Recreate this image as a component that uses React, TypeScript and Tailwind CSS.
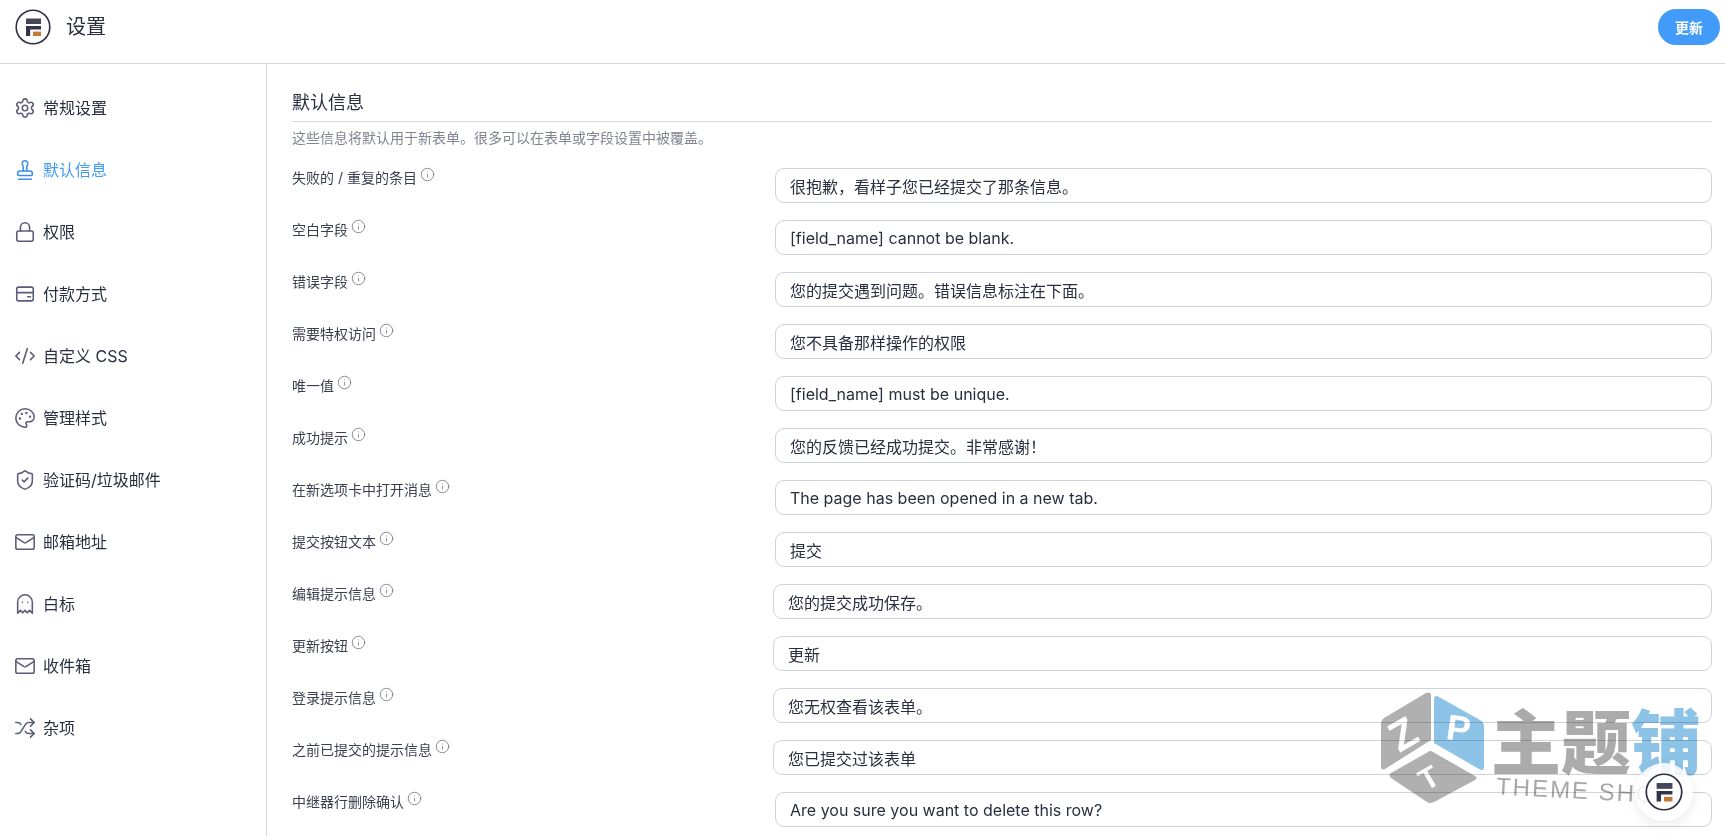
import React from "react";
import { Settings, Stamp, Lock, CodeXml, Palette, ShieldCheck, Mail, Ghost, Shuffle, Info } from "lucide-react";

function Logo({ size }: { size: number }) {
  return (
    <svg width={size} height={size} viewBox="0 0 36 36" fill="none">
      <circle cx="18" cy="18" r="16.8" stroke="#2f3044" strokeWidth="1.6" fill="#fff" />
      <rect x="11" y="9.5" width="15" height="5.5" fill="#45465a" />
      <path d="M11 17h15v3.4H15.2V27H11z" fill="#33344a" />
      <rect x="18" y="22.6" width="8" height="4.4" fill="#c47a35" />
    </svg>
  );
}

function Card({ size, strokeWidth, className }: { size: number; strokeWidth: number; className?: string }) {
  return (
    <svg width={size} height={size} viewBox="0 0 24 24" fill="none" stroke="currentColor" strokeWidth={strokeWidth} strokeLinecap="round" className={className}>
      <rect x="3" y="4.5" width="18" height="15" rx="2" />
      <path d="M3 10.5h18M15 15h3" />
    </svg>
  );
}

const nav = [
  { label: "常规设置", Icon: Settings },
  { label: "默认信息", Icon: Stamp, active: true },
  { label: "权限", Icon: Lock },
  { label: "付款方式", Icon: Card },
  { label: "自定义 CSS", Icon: CodeXml },
  { label: "管理样式", Icon: Palette },
  { label: "验证码/垃圾邮件", Icon: ShieldCheck },
  { label: "邮箱地址", Icon: Mail },
  { label: "白标", Icon: Ghost },
  { label: "收件箱", Icon: Mail },
  { label: "杂项", Icon: Shuffle },
];

const rows = [
  ["失败的 / 重复的条目", "很抱歉，看样子您已经提交了那条信息。", 0],
  ["空白字段", "[field_name] cannot be blank.", 0],
  ["错误字段", "您的提交遇到问题。错误信息标注在下面。", 0],
  ["需要特权访问", "您不具备那样操作的权限", 0],
  ["唯一值", "[field_name] must be unique.", 0],
  ["成功提示", "您的反馈已经成功提交。非常感谢！", 0],
  ["在新选项卡中打开消息", "The page has been opened in a new tab.", 0],
  ["提交按钮文本", "提交", 0],
  ["编辑提示信息", "您的提交成功保存。", 1],
  ["更新按钮", "更新", 1],
  ["登录提示信息", "您无权查看该表单。", 1],
  ["之前已提交的提示信息", "您已提交过该表单", 1],
  ["中继器行删除确认", "Are you sure you want to delete this row?", 0],
] as const;

function Watermark() {
  return (
    <div className="absolute left-[1381px] top-[692px] w-[290px] h-[120px] pointer-events-none mix-blend-multiply">
      <svg width="106" height="114" viewBox="0 0 106 114" className="absolute left-0 top-0">
        <path d="M0 31 Q0 28 3 26 L45 1 Q50 -1 50 4 L50 48 L4 77 Q0 79 0 74 Z" fill="#b0b0b0" />
        <path d="M53 8 Q53 2 58 5 L99 28 Q103 30 103 35 L103 75 Q103 80 98 77 L53 51 Z" fill="#8cc3e6" />
        <path d="M47 60 Q49 58 52 60 L94 84 Q97 86 94 88 L53 110 Q49 112 46 110 L10 86 Q7 83 10 81 Z" fill="#b0b0b0" />
        <text x="13" y="64" fill="#fff" fontSize="42" fontWeight="700" fontFamily="Liberation Sans" transform="rotate(-30 13 64)" dx="6">Z</text>
        <text x="64" y="47" fill="#fff" fontSize="36" fontWeight="700" fontFamily="Liberation Sans" transform="rotate(8 64 47)">P</text>
        <text x="38" y="95" fill="#fff" fontSize="30" fontWeight="700" fontFamily="Liberation Sans" transform="rotate(-30 50 84)">T</text>
      </svg>
      <div className="absolute left-[110px] top-[2px] flex text-[70px] leading-[90px] font-black font-['Noto_Sans_CJK_SC',sans-serif] whitespace-nowrap">
        <span className="text-[#ababab]">主题</span>
        <span className="text-[#8cc3e6]">铺</span>
      </div>
      <div className="absolute left-[115px] top-[86px] text-[24px] leading-[26px] tracking-[2px] text-[#a8a8a8] font-['Liberation_Sans',sans-serif] whitespace-nowrap rotate-[3deg]">THEME SHOP</div>
    </div>
  );
}

export default function App() {
  return (
    <div className="relative w-[1725px] h-[836px] overflow-hidden bg-white text-[#282f3f] font-['Inter','Noto_Sans_CJK_SC',sans-serif]">
      <header className="h-[64px] border-b border-[#d8d8d8] flex items-center justify-between pl-[15px] pr-[5px] pb-[9px]">
        <div className="flex items-center gap-[15px]">
          <Logo size={36} />
          <span className="text-[20px] leading-[28px] text-[#2b2f3d]">设置</span>
        </div>
        <button className="w-[62px] h-[36px] rounded-full bg-[#429bf8] text-white text-[14px] font-semibold">更新</button>
      </header>
      <div className="flex h-[772px]">
        <aside className="w-[267px] shrink-0 border-r border-[#d8d8d8] pl-[14px] pt-[26px] flex flex-col gap-[26px]">
          {nav.map(({ label, Icon, active }) => (
            <div key={label + (active ? "a" : "")} className={`h-[36px] flex items-center gap-[7px] text-[16px] ${active ? "text-[#429bf8]" : "text-[#282f3f]"}`}>
              <Icon size={22} strokeWidth={1.7} className={active ? "text-[#3b8fe8]" : "text-[#5b5b7a]"} />
              <span>{label}</span>
            </div>
          ))}
        </aside>
        <main className="flex-1 min-w-0 pl-[25px] pr-[13px] pt-[28px]">
          <h2 className="text-[18px] leading-[22px] pb-[7px] border-b border-[#d8d8d8] text-[#282f3f]">默认信息</h2>
          <p className="text-[14px] leading-[20px] mt-[6px] text-[#808590]">这些信息将默认用于新表单。很多可以在表单或字段设置中被覆盖。</p>
          <div className="flex flex-col gap-[17px] mt-[20px]">
            {rows.map(([label, value, shift]) => (
              <div key={label} className="flex h-[35px]">
                <div className="w-[483px] shrink-0 flex items-start text-[14px] leading-[20px] text-[#3a3f4e]">
                  <span>{label}</span>
                  <Info size={15} strokeWidth={1.3} className="ml-[3px] -mt-[1px] text-[#70747f]" />
                </div>
                <input
                  readOnly
                  value={value}
                  className={`flex-1 min-w-0 h-[35px] rounded-[9px] border border-[#cfd3d8] bg-white px-[14px] text-[16px] text-[#282f3f] outline-none ${shift ? "-ml-[2px]" : ""}`}
                />
              </div>
            ))}
          </div>
        </main>
      </div>
      <Watermark />
      <div className="absolute left-[1635px] top-[763px] w-[58px] h-[58px] rounded-full bg-white/85 shadow-[0_4px_12px_rgba(60,60,90,0.10)] flex items-center justify-center">
        <Logo size={38} />
      </div>
    </div>
  );
}
